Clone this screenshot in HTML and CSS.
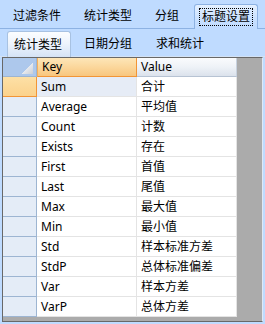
FILE: index.html
```html
<!DOCTYPE html>
<html>

<head>
  <title>标题设置</title>
  <link rel="stylesheet" href="styles.css">
</head>

<body>
  <div class="tabs outer-tabs">
    <div class="tab">过滤条件</div>
    <div class="tab">统计类型</div>
    <div class="tab">分组</div>
    <div class="tab active"><span class="focus">标题设置</span></div>
  </div>

  <div class="panel">
    <div class="tabs inner-tabs">
      <div class="tab active">统计类型</div>
      <div class="tab">日期分组</div>
      <div class="tab">求和统计</div>
    </div>

    <div class="grid">
      <div class="row head">
        <div class="rh corner"></div>
        <div class="cell key-head">Key</div>
        <div class="cell value-head">Value</div>
      </div>
      <div class="row">
        <div class="rh current"></div>
        <div class="cell sel">Sum</div>
        <div class="cell">合计</div>
      </div>
      <div class="row">
        <div class="rh"></div>
        <div class="cell">Average</div>
        <div class="cell">平均值</div>
      </div>
      <div class="row">
        <div class="rh"></div>
        <div class="cell">Count</div>
        <div class="cell">计数</div>
      </div>
      <div class="row">
        <div class="rh"></div>
        <div class="cell">Exists</div>
        <div class="cell">存在</div>
      </div>
      <div class="row">
        <div class="rh"></div>
        <div class="cell">First</div>
        <div class="cell">首值</div>
      </div>
      <div class="row">
        <div class="rh"></div>
        <div class="cell">Last</div>
        <div class="cell">尾值</div>
      </div>
      <div class="row">
        <div class="rh"></div>
        <div class="cell">Max</div>
        <div class="cell">最大值</div>
      </div>
      <div class="row">
        <div class="rh"></div>
        <div class="cell">Min</div>
        <div class="cell">最小值</div>
      </div>
      <div class="row">
        <div class="rh"></div>
        <div class="cell">Std</div>
        <div class="cell">样本标准方差</div>
      </div>
      <div class="row">
        <div class="rh"></div>
        <div class="cell">StdP</div>
        <div class="cell">总体标准偏差</div>
      </div>
      <div class="row">
        <div class="rh"></div>
        <div class="cell">Var</div>
        <div class="cell">样本方差</div>
      </div>
      <div class="row">
        <div class="rh"></div>
        <div class="cell">VarP</div>
        <div class="cell">总体方差</div>
      </div>
    </div>
  </div>
</body>

</html>
```

FILE: styles.css
```css
* {
  box-sizing: border-box;
}

body {
  margin: 0;
  width: 265px;
  height: 324px;
  overflow: hidden;
  background-color: #bfdbff;
  font-family: "Noto Sans", "Noto Sans CJK SC", sans-serif;
  font-size: 12px;
  color: #000;
}

/* 标签栏 */
.tabs {
  display: flex;
  align-items: flex-end;
}

.tab {
  line-height: 16px;
  white-space: nowrap;
}

.outer-tabs {
  height: 29px;
  padding-left: 2px;
  border-bottom: 1px solid #8db2e3;
}

.outer-tabs .tab {
  height: 24px;
  padding: 4px 11px 0;
  margin-right: 1px;
}

.outer-tabs .tab.active {
  height: 25px;
  margin-left: 3px;
  margin-bottom: -1px;
  padding: 3px 4px 0;
  border: 1px solid #8db2e3;
  border-bottom: none;
  border-radius: 3px 3px 0 0;
  background: linear-gradient(#e4f0ff, #c8e0ff 60%, #bfdbff);
}

.focus {
  display: block;
  padding: 0 2px;
  border: 1px dotted #000;
}

/* 内层面板 */
.inner-tabs {
  height: 28px;
  padding-left: 7px;
  border-bottom: 1px solid #d3e2f5;
}

.inner-tabs .tab {
  height: 25px;
  padding: 5px 11px 0;
  margin-left: 2px;
}

.inner-tabs .tab.active {
  height: 26px;
  margin-left: 0;
  margin-bottom: -1px;
  padding: 5px 8px 0 6px;
  border: 1px solid #a8c2e2;
  border-bottom: none;
  border-radius: 3px 3px 0 0;
  background: linear-gradient(#fbfdff, #eef4fc 45%, #d5e3f5);
}

/* 表格 */
.grid {
  height: 265px;
  margin: 0 2px;
  border: 1px solid #686868;
  border-right-color: #dfe9f6;
  background-color: #ababab;
}

.row {
  display: grid;
  grid-template-columns: 34px 100px 100px;
  height: 20px;
}

.row.head {
  height: 19px;
}

.rh {
  background-color: #e4ecf7;
  border-right: 1px solid #9db5d2;
  border-bottom: 1px solid #9db5d2;
}

.rh.current {
  background: linear-gradient(#fde0a6, #fbd28c);
  border-color: #f29536;
}

.rh.corner {
  display: flex;
  justify-content: flex-end;
  align-items: flex-end;
  padding: 0 3px 2px 0;
  background-color: #adc8ec;
  border-color: #9db5d2;
}

.rh.corner::after {
  content: "";
  width: 11px;
  height: 11px;
  background: linear-gradient(135deg, transparent 50%, #e6e9ee 50%, #c9ced6);
}

.cell {
  padding-left: 4px;
  line-height: 19px;
  background-color: #fff;
  border-right: 1px solid #e4e4e4;
  border-bottom: 1px solid #e4e4e4;
  white-space: nowrap;
  overflow: hidden;
}

.cell.sel {
  background-color: #e6ecf6;
}

.key-head {
  line-height: 18px;
  background: linear-gradient(#fde6b8, #fbd79c 50%, #f8c67e);
  border: 1px solid #f29536;
  border-top: none;
  border-left-color: #f6b05c;
}

.value-head {
  line-height: 18px;
  background: linear-gradient(#fafbfd, #eef2f7 50%, #dbe2ec);
  border-right: 1px solid #c8d2df;
  border-bottom: 1px solid #b7c3d3;
}
```
